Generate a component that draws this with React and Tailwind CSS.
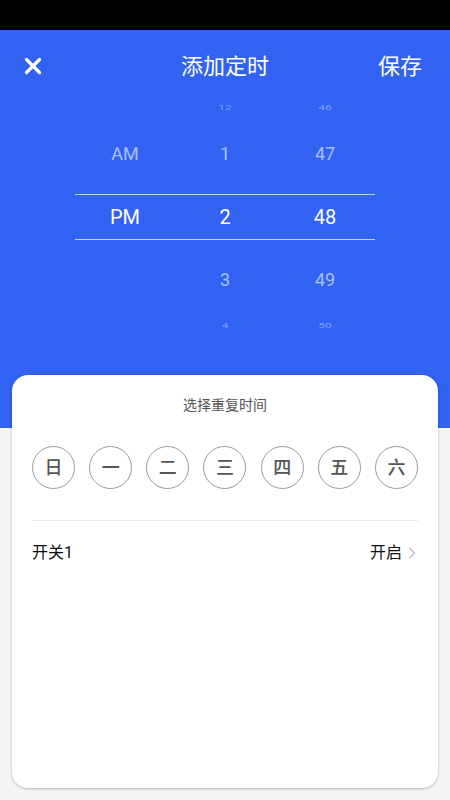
import React from 'react';
import { X, ChevronRight } from 'lucide-react';

const font = { fontFamily: 'Roboto, "Noto Sans CJK SC", sans-serif' };

const rows = [
  { h: 'h-[12px]', cells: ['', '12', '46'], cls: 'text-[12px] text-white/40 scale-y-[0.55]' },
  { h: 'h-[80px]', cells: ['AM', '1', '47'], cls: 'text-[18px] text-white/60' },
  { h: 'h-[46px] border-y-[1.5px] border-white/70', cells: ['PM', '2', '48'], cls: 'text-[20px] text-white' },
  { h: 'h-[80px]', cells: ['', '3', '49'], cls: 'text-[18px] text-white/60' },
  { h: 'h-[12px]', cells: ['', '4', '50'], cls: 'text-[12px] text-white/40 scale-y-[0.55]' },
];

const days = ['日', '一', '二', '三', '四', '五', '六'];

export default function App() {
  return (
    <div className="w-[450px] h-[800px] bg-[#f5f5f5] flex flex-col overflow-hidden" style={font}>
      <div className="h-[30px] bg-black shrink-0" />
      <div className="bg-[#3262f2] h-[398px] shrink-0 flex flex-col">
        <div className="h-[72px] grid grid-cols-[1fr_auto_1fr] items-center px-5">
          <X size={26} strokeWidth={3} className="text-white" />
          <span className="text-white text-[22px]">添加定时</span>
          <span className="text-white text-[22px] justify-self-end pr-[8px]">保存</span>
        </div>
        <div className="mx-[75px] flex flex-col">
          {rows.map((r, i) => (
            <div key={i} className={`grid grid-cols-3 items-center ${r.h}`}>
              {r.cells.map((c, j) => (
                <div key={j} className={`text-center leading-none ${r.cls}`}>{c}</div>
              ))}
            </div>
          ))}
        </div>
      </div>
      <div className="mx-[12px] -mt-[53px] h-[413px] bg-white rounded-[16px] shadow-[0_1px_3px_rgba(0,0,0,0.25)] px-5 flex flex-col">
        <div className="pt-[20px] text-center text-[14px] text-[#555]">选择重复时间</div>
        <div className="mt-[30px] flex justify-between">
          {days.map((d) => (
            <div key={d} className="w-[43px] h-[43px] rounded-full border border-[#999] flex items-center justify-center text-[18px] font-medium text-[#555]">
              {d}
            </div>
          ))}
        </div>
        <div className="mt-[31px] border-t border-[#e8e8e8]" />
        <div className="h-[64px] flex items-center justify-between">
          <span className="text-[16px] text-[#111]">开关1</span>
          <div className="flex items-center">
            <span className="text-[16px] text-[#111]">开启</span>
            <ChevronRight size={20} strokeWidth={1.5} className="text-[#bbb] -mr-[4px]" />
          </div>
        </div>
      </div>
    </div>
  );
}
